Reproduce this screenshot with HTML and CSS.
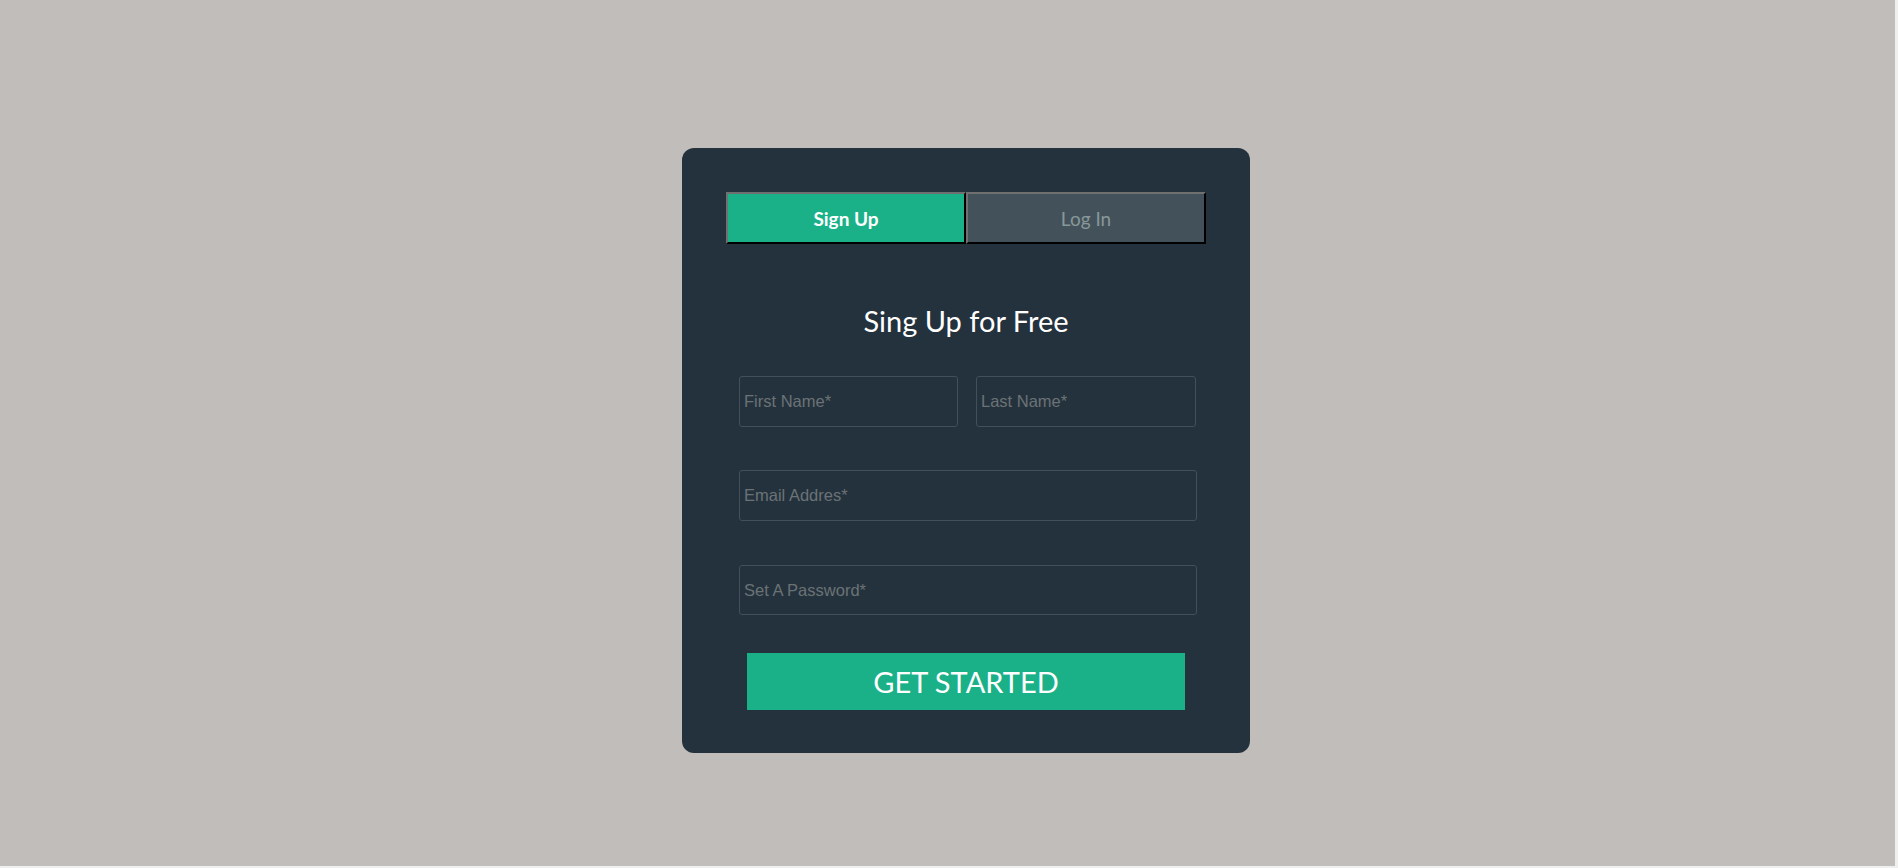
FILE: index.html
```html
<!DOCTYPE html>
<html lang="en">
<head>
<meta charset="utf-8">
<title>Sign Up for Free</title>
<link rel="stylesheet" href="styles.css">
</head>
<body>
<main class="page">
  <section class="form-card">
    <div class="tabs">
      <button class="tab tab-active" type="button">Sign Up</button>
      <button class="tab" type="button">Log In</button>
    </div>
    <h1 class="title">Sing Up for Free</h1>
    <form class="signup">
      <div class="row row-split">
        <input class="field" type="text" placeholder="First Name*">
        <input class="field" type="text" placeholder="Last Name*">
      </div>
      <div class="row row-email">
        <input class="field field-wide" type="email" placeholder="Email Addres*">
      </div>
      <div class="row row-pass">
        <input class="field field-wide" type="password" placeholder="Set A Password*">
      </div>
      <button class="submit" type="button">Get Started</button>
    </form>
  </section>
</main>
</body>
</html>
```
FILE: styles.css
```css
html {
  background: #efefef;
}
body {
  margin: 0;
}
.page {
  width: 1895px;
  height: 866px;
  background: #c1bdba;
  box-sizing: border-box;
  padding: 148px 0 0 682px;
  overflow: hidden;
}
.form-card {
  width: 568px;
  height: 605px;
  box-sizing: border-box;
  padding: 44px 44px 0 44px;
  background: #24323d;
  border-radius: 12px;
}
.tabs {
  display: flex;
  height: 52px;
}
.tab {
  width: 240px;
  height: 52px;
  box-sizing: border-box;
  border: 2px outset #767676;
  border-top-color: #707070;
  border-left-color: #707070;
  border-right-color: #1e2326;
  border-bottom-color: #1e2326;
  margin: 0;
  padding: 0;
  background: #43525a;
  color: #889799;
  font-family: Lato, "Open Sans", sans-serif;
  font-size: 19px;
  font-weight: 400;
  cursor: pointer;
}
.tab-active {
  background: #1ab188;
  color: #ffffff;
  font-weight: 700;
}
.title {
  margin: 62px 0 0 0;
  font-family: Lato, "Open Sans", sans-serif;
  font-size: 29px;
  line-height: 29px;
  font-weight: 400;
  color: #ffffff;
  text-align: center;
}
.signup {
  display: flex;
  flex-direction: column;
  margin: 41px 0 0 13px;
  width: 458px;
}
.row {
  display: flex;
}
.row-split {
  gap: 18px;
}
.row-email {
  margin-top: 43px;
}
.row-pass {
  margin-top: 44px;
}
.field {
  width: 220px;
  height: 51px;
  box-sizing: border-box;
  margin: 0;
  padding: 0 4px;
  background: transparent;
  border: 1px solid #434f59;
  border-radius: 3px;
  color: #ffffff;
  font-family: "Liberation Sans", Arial, sans-serif;
  font-size: 16.5px;
  outline: none;
}
.row-split .field:first-child {
  width: 219px;
}
.field::placeholder {
  color: #6b7276;
}
.field-wide {
  width: 458px;
}
.row-pass .field {
  height: 50px;
}
.submit {
  align-self: flex-start;
  margin: 38px 0 0 8px;
  width: 438px;
  height: 57px;
  border: 0;
  padding: 0;
  background: #1ab188;
  color: #ffffff;
  font-family: Lato, "Open Sans", sans-serif;
  font-size: 29px;
  text-transform: uppercase;
  cursor: pointer;
}
```
